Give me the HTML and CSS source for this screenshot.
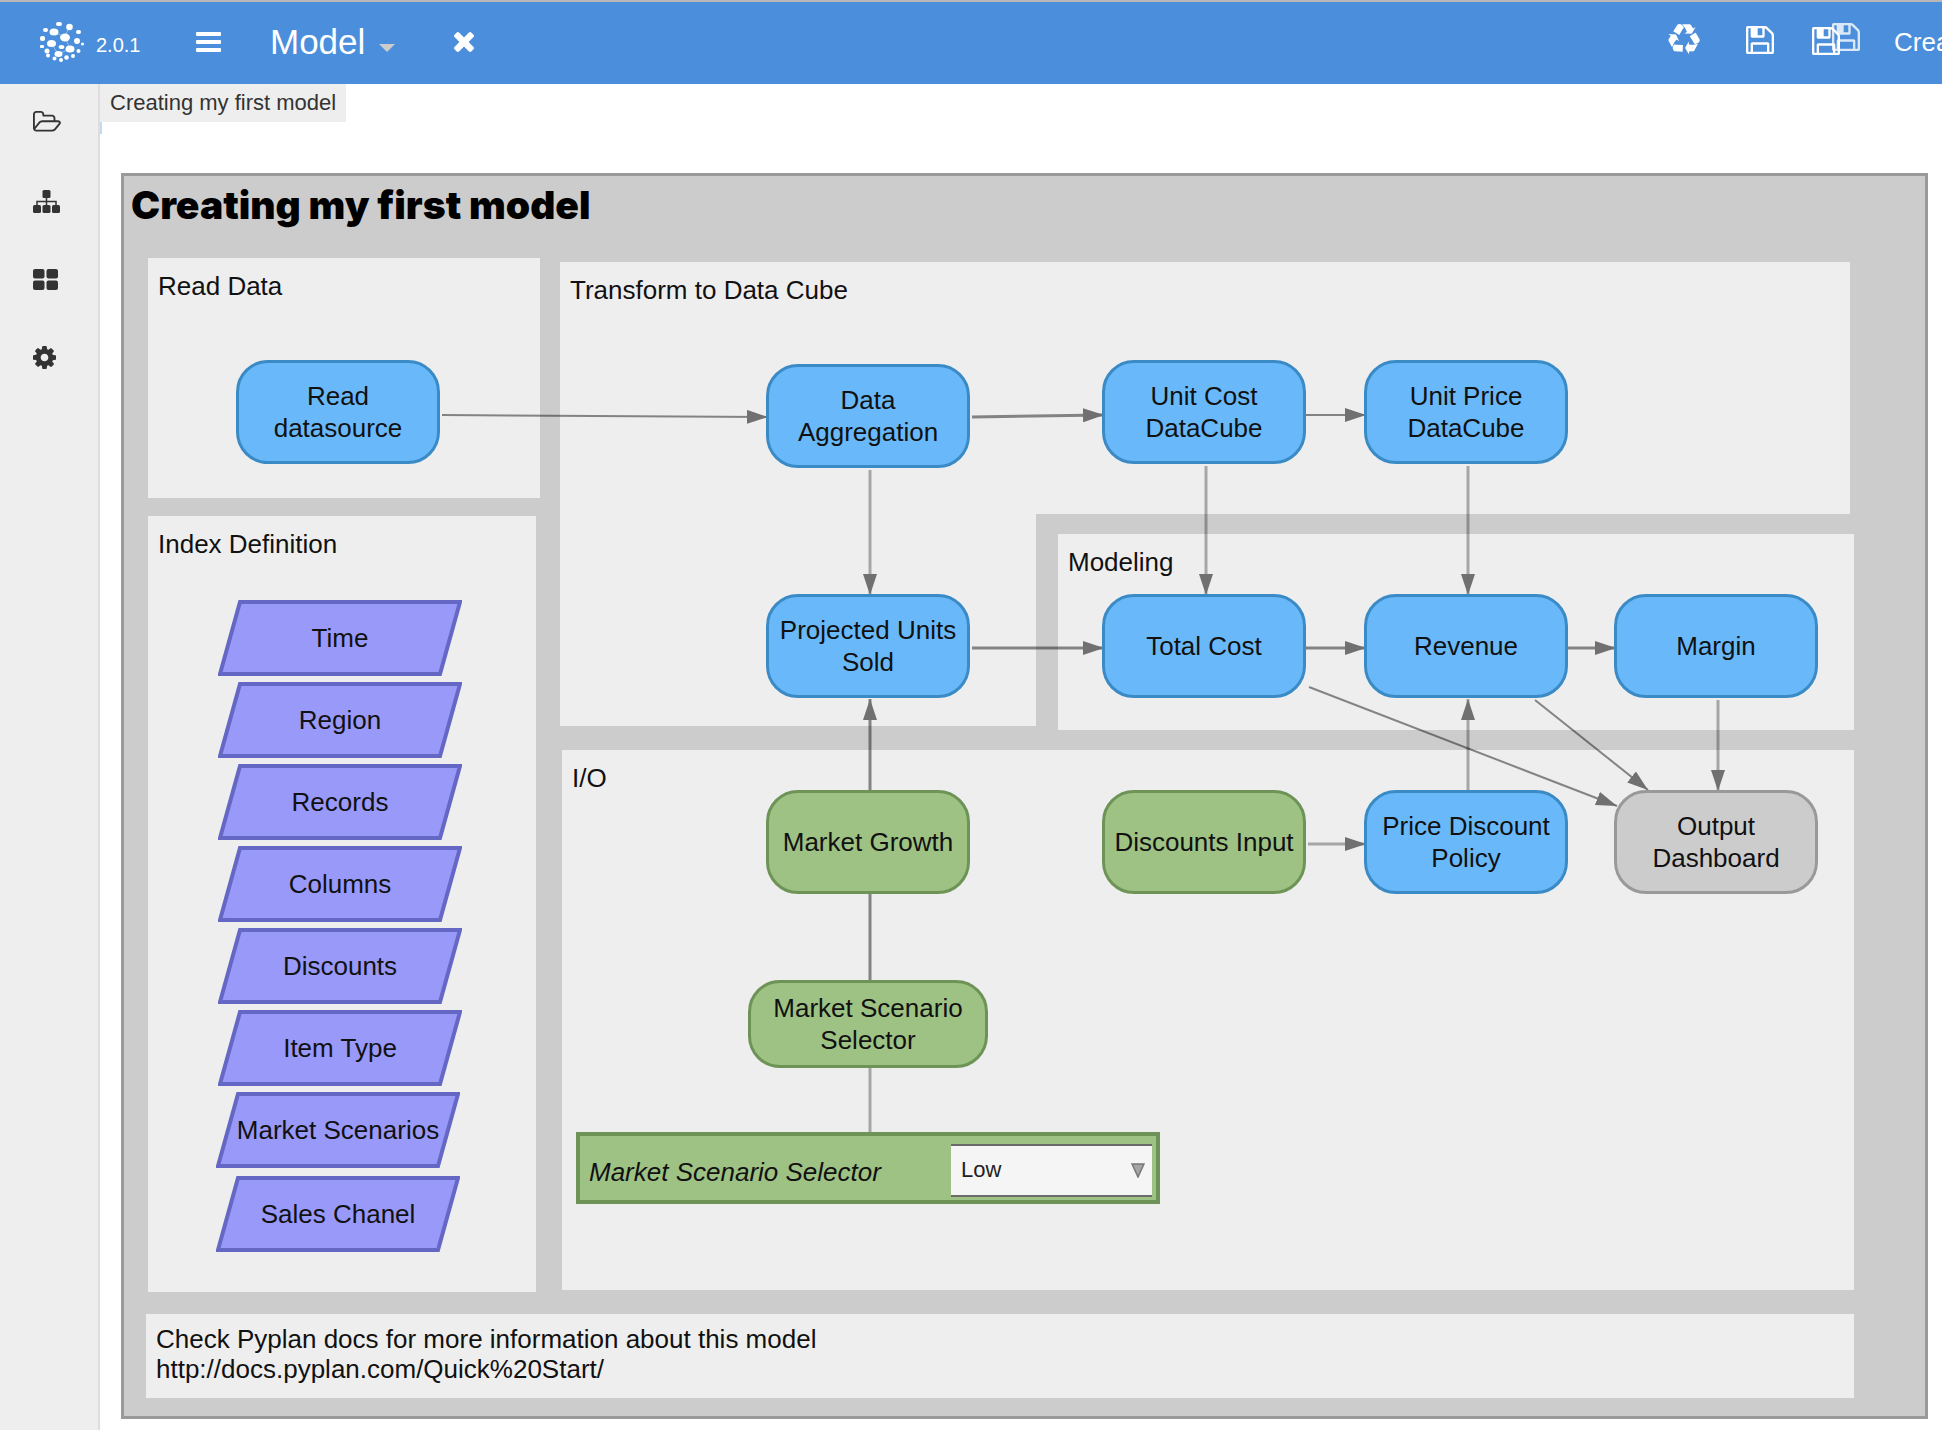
FILE: index.html
```html
<!DOCTYPE html>
<html lang="en">
<head>
<meta charset="utf-8">
<title>Pyplan - Creating my first model</title>
<link rel="stylesheet" href="styles.css">
</head>
<body>
<svg class="defs" aria-hidden="true">
  <symbol id="floppy" viewBox="128 128 1536 1536"><path d="M512 1536h768v-384h-768v384zm896 0h128v-896q0-14-10-38.500t-20-34.500l-281-281q-10-10-34-20t-39-10v416q0 40-28 68t-68 28h-576q-40 0-68-28t-28-68v-416h-128v1280h128v-416q0-40 28-68t68-28h832q40 0 68 28t28 68v416zm-384-928v-320q0-13-9.500-22.500t-22.500-9.500h-192q-13 0-22.500 9.500t-9.500 22.500v320q0 13 9.500 22.500t22.500 9.500h192q13 0 22.500-9.500t9.500-22.500zm640 32v928q0 40-28 68t-68 28h-1344q-40 0-68-28t-28-68v-1344q0-40 28-68t68-28h928q40 0 88 20t76 48l280 280q28 28 48 76t20 88z"/></symbol>
  <symbol id="slab" viewBox="0 0 244 76"><polygon points="22,2 242,2 222,74 2,74" fill="#9999f9" stroke="#6468c4" stroke-width="4"/></symbol>
</svg>

<header class="topbar">
  <a class="brand" href="#">
    <svg class="logo" viewBox="0 0 44 40" aria-label="Pyplan" role="img">
      <g stroke="#fff" stroke-opacity=".4" stroke-width="1"><path d="M14 10L25 15 29 5" fill="none"/><path d="M11 21L18 32 30 27 25 15" fill="none"/></g>
      <g fill="#fff">
        <ellipse cx="14" cy="10" rx="4.500" ry="3.500"/><ellipse cx="25" cy="15.500" rx="5" ry="4"/><ellipse cx="11.500" cy="21.500" rx="4.500" ry="3.500"/><ellipse cx="30" cy="27" rx="4.500" ry="3.500"/><ellipse cx="18.500" cy="32" rx="4" ry="3"/><circle cx="29.500" cy="5" r="3.300"/>
        <circle cx="37" cy="19" r="3"/><ellipse cx="21.500" cy="25" rx="2.800" ry="2"/>
        <rect x="16" y="0" width="6" height="4" rx="2"/><rect x="3" y="6" width="5" height="4" rx="2"/><rect x="36" y="8" width="5" height="4" rx="2"/><rect x="0" y="14" width="5" height="5" rx="2"/><rect x="0" y="23" width="4" height="3" rx="1"/>
        <circle cx="42.500" cy="22" r="1.500"/><circle cx="38.500" cy="29" r="2"/><circle cx="7" cy="29" r="2.500"/><circle cx="8" cy="33.500" r="2"/><circle cx="14.500" cy="36.500" r="2"/><circle cx="21" cy="38" r="2"/><circle cx="26.500" cy="35.500" r="2.300"/><circle cx="33" cy="34" r="2"/>
      </g>
    </svg>
    <span class="version">2.0.1</span>
  </a>
  <button class="icon-btn menu-btn" aria-label="Toggle menu"><svg width="25" height="20" viewBox="0 0 25 20"><rect width="25" height="4" rx="1"/><rect y="8" width="25" height="4" rx="1"/><rect y="16" width="25" height="4" rx="1"/></svg></button>
  <button class="module-btn">Model <svg width="16" height="8" viewBox="0 0 16 8"><path d="M0 0H16L8 8Z"/></svg></button>
  <button class="icon-btn close-btn" aria-label="Close model"><svg width="20" height="20" viewBox="302 366 1188 1188"><path d="M1490 1322q0 40-28 68l-136 136q-28 28-68 28t-68-28l-294-294-294 294q-28 28-68 28t-68-28l-136-136q-28-28-28-68t28-68l294-294-294-294q-28-28-28-68t28-68l136-136q28-28 68-28t68 28l294 294 294-294q28-28 68-28t68 28l136 136q28 28 28 68t-28 68l-294 294 294 294q28 28 28 68z"/></svg></button>
  <div class="actions">
    <button class="icon-btn" aria-label="Recycle"><svg width="32" height="32" viewBox="0 0 1792 1792"><path d="M836 1169l-15 368-2 22-420-29q-36-3-67-31.500t-47-65.500q-11-27-14.500-55t4-65 12-55 21.500-64 19-53q78 12 509 28zm-387-586l180 379-147-92q-63 72-111.500 144.500t-72.500 125-39.500 94.500-18.500 63l-4 21-190-357q-17-26-18-56t6-47l8-18q35-63 114-188l-140-86zm1231 517l-188 359q-12 29-36.500 46.500t-43.500 20.500l-18 4q-71 7-219 12l8 164-230-367 211-362 7 173q170 16 283 5t170-33zm-785-924q-47 63-265 435l-317-187-19-12 225-356q20-31 60-45t80-10q24 2 48.500 12t42 21 41.500 33 36 34.500 36 39.500 32 35zm655 307l212 363q18 37 12.500 76t-27.500 74q-13 20-33 37t-38 28-48.500 22-47 16-51.500 14-46 12q-34-72-265-436l313-195zm-143-226l142-83-220 373-419-20 151-86q-34-89-75-166t-75.500-123.500-64.500-80-47-46.500l-17-13 405 1q31-3 58 10.500t39 28.500l11 15q39 61 112 190z"/></svg></button>
    <button class="icon-btn" aria-label="Save"><svg width="28" height="28"><use href="#floppy"/></svg></button>
    <button class="icon-btn" aria-label="Save as"><svg width="48" height="32"><use href="#floppy" x="20" y="0" width="28" height="28" opacity=".8"/><use href="#floppy" x="0" y="4" width="28" height="28"/></svg></button>
    <a class="model-name" href="#">Crea</a>
  </div>
</header>

<div class="shell">
  <nav class="sidebar" aria-label="Sections">
    <button aria-label="Files"><svg width="28" height="24" viewBox="0 0 1920 1646"><path d="M1781 803q0-35-53-35h-1088q-40 0-85.500 21.500t-71.500 52.500l-294 363q-18 24-18 40 0 35 53 35h1088q40 0 86-22t71-53l294-363q18-22 18-39zm-1141-163h768v-160q0-40-28-68t-68-28h-576q-40 0-68-28t-28-68v-64q0-40-28-68t-68-28h-320q-40 0-68 28t-28 68v853l256-315q44-53 116-87.500t140-34.500zm1269 163q0 62-46 120l-295 363q-43 53-116 87.500t-140 34.500h-1088q-92 0-158-66t-66-158v-960q0-92 66-158t158-66h320q92 0 158 66t66 158v32h544q92 0 158 66t66 158v160h192q54 0 99 24.500t67 70.500q15 32 15 68z"/></svg></button>
    <button aria-label="Model diagram"><svg width="27" height="23" viewBox="0 0 27 23"><rect x="9.500" width="8" height="8" rx="1.500"/><rect y="15" width="8" height="8" rx="1.500"/><rect x="9.500" y="15" width="8" height="8" rx="1.500"/><rect x="19" y="15" width="8" height="8" rx="1.500"/><path d="M13.500 7V16M4 16V11.500H23V16" fill="none" stroke="#333" stroke-width="1.500"/></svg></button>
    <button aria-label="Dashboards"><svg width="25" height="21" viewBox="0 0 25 21"><rect width="11.500" height="9.500" rx="2"/><rect x="13.500" width="11.500" height="9.500" rx="2"/><rect y="11.500" width="11.500" height="9.500" rx="2"/><rect x="13.500" y="11.500" width="11.500" height="9.500" rx="2"/></svg></button>
    <button aria-label="Settings"><svg width="23" height="23" viewBox="128 128 1536 1536"><path d="M1152 896q0-106-75-181t-181-75-181 75-75 181 75 181 181 75 181-75 75-181zm512-109v222q0 12-8 23t-20 13l-185 28q-19 54-39 91 35 50 107 138 10 12 10 25t-9 23q-27 37-99 108t-94 71q-12 0-26-9l-138-108q-44 23-91 38-16 136-29 186-7 28-36 28h-222q-14 0-24.500-8.500t-11.500-21.500l-28-184q-49-16-90-37l-141 107q-10 9-25 9-14 0-25-11-126-114-165-168-7-10-7-23 0-12 8-23 15-21 51-66.500t54-70.500q-27-50-41-99l-183-27q-13-2-21-12.500t-8-23.500v-222q0-12 8-23t19-13l186-28q14-46 39-92-40-57-107-138-10-12-10-24 0-10 9-23 26-36 98.500-107.500t94.500-71.500q13 0 26 10l138 107q44-23 91-38 16-136 29-186 7-28 36-28h222q14 0 24.500 8.500t11.500 21.500l28 184q49 16 90 37l142-107q9-9 24-9 13 0 25 10 129 119 165 170 7 8 7 22 0 12-8 23-15 21-51 66.500t-54 70.500q26 50 41 98l183 28q13 2 21 12.500t8 23.500z"/></svg></button>
  </nav>

  <main class="workspace">
    <nav class="crumbs" aria-label="Breadcrumb"><a href="#">Creating my first model</a></nav>

    <div class="diagram">
      <h1>Creating my first model</h1>

      <section class="panel read"><h2>Read Data</h2></section>
      <section class="panel transform"><h2>Transform to Data Cube</h2></section>
      <section class="panel modeling"><h2>Modeling</h2></section>
      <section class="panel io"><h2>I/O</h2></section>
      <section class="panel index">
        <h2>Index Definition</h2>
        <div class="index-list">
          <button class="slab"><svg><use href="#slab"/></svg><span>Time</span></button>
          <button class="slab"><svg><use href="#slab"/></svg><span>Region</span></button>
          <button class="slab"><svg><use href="#slab"/></svg><span>Records</span></button>
          <button class="slab"><svg><use href="#slab"/></svg><span>Columns</span></button>
          <button class="slab"><svg><use href="#slab"/></svg><span>Discounts</span></button>
          <button class="slab"><svg><use href="#slab"/></svg><span>Item Type</span></button>
          <button class="slab"><svg><use href="#slab"/></svg><span>Market Scenarios</span></button>
          <button class="slab"><svg><use href="#slab"/></svg><span>Sales Chanel</span></button>
        </div>
      </section>
      <section class="panel notes"><p>Check Pyplan docs for more information about this model<br>http://docs.pyplan.com/Quick%20Start/</p></section>

      <svg class="edges" viewBox="121 173 1807 1246" aria-hidden="true">
        <defs><marker id="tip" viewBox="0 0 21 14" markerWidth="21" markerHeight="14" refX="21" refY="7" orient="auto" markerUnits="userSpaceOnUse"><path d="M0 0L21 7 0 14Z" fill="#707070"/></marker></defs>
        <g class="thin" marker-end="url(#tip)">
          <path d="M442 415L768 417"/><path d="M1306 415H1366"/>
          <path d="M1309 687L1617 806"/><path d="M1535 700L1648 790"/>
        </g>
        <g class="firm">
          <path d="M972 417L1104 415" marker-end="url(#tip)"/><path d="M972 648H1104" marker-end="url(#tip)"/>
          <path d="M1306 648H1366" marker-end="url(#tip)"/><path d="M1568 648H1616" marker-end="url(#tip)"/>
          <path d="M870 790V699" marker-end="url(#tip)"/><path d="M870 894V980"/>
        </g>
        <g class="light">
          <path d="M870 470V595" marker-end="url(#tip)"/><path d="M1206 466V595" marker-end="url(#tip)"/><path d="M1468 466V595" marker-end="url(#tip)"/>
          <path d="M1468 790V699" marker-end="url(#tip)"/><path d="M1718 700V791" marker-end="url(#tip)"/><path d="M1308 844H1366" marker-end="url(#tip)"/>
          <path d="M870 1068V1132"/>
        </g>
      </svg>

      <button class="node blue read-source">Read<br>datasource</button>
      <button class="node blue aggregation">Data<br>Aggregation</button>
      <button class="node blue unit-cost">Unit Cost<br>DataCube</button>
      <button class="node blue unit-price">Unit Price<br>DataCube</button>
      <button class="node blue units-sold">Projected Units<br>Sold</button>
      <button class="node blue total-cost">Total Cost</button>
      <button class="node blue revenue">Revenue</button>
      <button class="node blue margin">Margin</button>
      <button class="node green growth">Market Growth</button>
      <button class="node green discounts-input">Discounts Input</button>
      <button class="node blue discount-policy">Price Discount<br>Policy</button>
      <button class="node gray output">Output<br>Dashboard</button>
      <button class="node green scenario">Market Scenario<br>Selector</button>

      <div class="form-node">
        <label for="scenario">Market Scenario Selector</label>
        <div class="picker">
          <select id="scenario"><option>Low</option></select>
          <svg width="14" height="15" viewBox="0 0 14 15" aria-hidden="true"><path d="M1 1H13L7 14Z" fill="#a5a5a5" stroke="#777" stroke-width="1.500"/></svg>
        </div>
      </div>
    </div>
  </main>
</div>
</body>
</html>
```
FILE: styles.css
```css
* { box-sizing: border-box; }

body {
  margin: 0;
  background: #fff;
  color: #111;
  font-family: "Liberation Sans", Arial, Helvetica, sans-serif;
  font-size: 26px;
  line-height: 32px;
  overflow-x: hidden;
}

button {
  margin: 0;
  padding: 0;
  border: 0;
  background: none;
  color: inherit;
  font: inherit;
  cursor: pointer;
}

a { color: inherit; text-decoration: none; }
svg { display: block; }
.defs { position: absolute; width: 0; height: 0; }

/* Top bar */
.topbar {
  display: flex;
  align-items: center;
  height: 84px;
  padding: 0 0 2px 40px;
  border-top: 2px solid #b8b8b8;
  background: #4b8edb;
  color: #fff;
  fill: #fff;
  overflow: hidden;
}
.brand { display: flex; align-items: center; gap: 12px; width: 156px; }
.logo { width: 44px; height: 40px; }
.version { padding-top: 6px; font-size: 20px; }
.module-btn {
  display: flex;
  align-items: center;
  gap: 14px;
  margin-left: 49px;
  font-size: 35px;
  line-height: 40px;
}
.module-btn svg { margin-top: 12px; fill: #ccc; }
.close-btn { margin-left: 59px; }
.actions {
  display: flex;
  align-items: center;
  gap: 46px;
  flex: none;
  width: 274px;
  margin-left: auto;
}
.actions .icon-btn { margin-top: -4px; }
.actions .icon-btn:nth-child(3) { margin: -6px -12px 0 -8px; }
.model-name { white-space: nowrap; }

/* Sidebar */
.shell { display: flex; min-height: calc(100vh - 84px); }
.sidebar {
  flex: none;
  width: 100px;
  border-right: 2px solid #e0dcdf;
  background: #eee;
  fill: #333;
}
.sidebar button {
  display: flex;
  align-items: center;
  width: 100%;
  height: 78px;
  padding-left: 33px;
}

/* Workspace */
.workspace { flex: 1; min-width: 0; }
.crumbs { position: relative; display: flex; }
.crumbs a {
  padding: 0 10px;
  background: #eee;
  color: #333;
  font-size: 22px;
  line-height: 38px;
}
.crumbs::after {
  content: "";
  position: absolute;
  top: 100%;
  left: 0;
  width: 2px;
  height: 12px;
  background: #c5d9f2;
}

/* Diagram canvas */
.diagram {
  position: relative;
  min-height: 1246px;
  margin: 51px 14px 11px 21px;
  padding: 12px 10px;
  background: #ccc;
  box-shadow: inset 0 0 0 3px #9a9a9a;
}
h1 {
  margin: 0;
  color: #000;
  font: 900 39px/40px Inter, "Liberation Sans", sans-serif;
  font-optical-sizing: none;
}
h2 { margin: 0; font-size: 26px; font-weight: 400; line-height: 32px; }

.panel { position: absolute; padding: 12px 10px; background: #eee; }
.panel.read { left: 27px; top: 85px; width: 392px; height: 240px; }
.panel.transform {
  left: 439px; top: 89px; width: 1290px; height: 464px;
  clip-path: polygon(0 0, 100% 0, 100% 252px, 476px 252px, 476px 100%, 0 100%);
}
.panel.index { left: 27px; top: 343px; width: 388px; height: 776px; }
.panel.modeling { left: 937px; top: 361px; width: 796px; height: 196px; }
.panel.io { left: 441px; top: 577px; width: 1292px; height: 540px; }
.panel.notes { left: 25px; top: 1141px; width: 1708px; height: 84px; padding-top: 10px; }
.panel.notes p { margin: 0; line-height: 30px; }

.index-list {
  display: flex;
  flex-direction: column;
  gap: 6px;
  margin: 40px 0 0 60px;
}
.slab { position: relative; width: 244px; height: 76px; }
.slab svg { position: absolute; inset: 0; width: 244px; height: 76px; }
.slab span { position: relative; }
.slab:nth-child(n+7) { margin-left: -2px; }
.slab:last-child { margin-top: 2px; }

.edges { position: absolute; left: 0; top: 0; width: 1807px; height: 1246px; pointer-events: none; fill: none; }
.thin { stroke: rgba(0, 0, 0, .45); stroke-width: 2; }
.firm { stroke: rgba(0, 0, 0, .45); stroke-width: 3; }
.light { stroke: rgba(0, 0, 0, .3); stroke-width: 3; }

.node {
  position: absolute;
  width: 204px;
  height: 104px;
  border: 3px solid;
  border-radius: 32px;
  white-space: nowrap;
}
.blue { border-color: #3a8ac6; background: #69b9fa; }
.green { border-color: #6d9456; background: #9ec284; }
.gray { border-color: #999; background: #ccc; }
.node, .slab, .form-node { color: #111; }

.read-source { left: 115px; top: 187px; }
.aggregation { left: 645px; top: 191px; }
.unit-cost { left: 981px; top: 187px; }
.unit-price { left: 1243px; top: 187px; }
.units-sold { left: 645px; top: 421px; }
.total-cost { left: 981px; top: 421px; }
.revenue { left: 1243px; top: 421px; }
.margin { left: 1493px; top: 421px; }
.growth { left: 645px; top: 617px; }
.discounts-input { left: 981px; top: 617px; }
.discount-policy { left: 1243px; top: 617px; }
.output { left: 1493px; top: 617px; }
.scenario { left: 627px; top: 807px; width: 240px; height: 88px; }

.form-node {
  position: absolute;
  left: 455px;
  top: 959px;
  display: flex;
  align-items: center;
  justify-content: space-between;
  width: 584px;
  height: 72px;
  padding: 4px 4px 0 9px;
  border: 4px solid #6d9456;
  background: #9ec284;
}
.form-node label { padding-top: 4px; font-style: italic; }
.picker { position: relative; width: 201px; }
.picker select {
  appearance: none;
  display: block;
  width: 100%;
  height: 53px;
  padding: 0 10px;
  border: solid #6b6b6b;
  border-width: 2px 0;
  border-radius: 0;
  background: #f5f5f5;
  color: #222;
  font: 22px/32px "Liberation Sans", Arial, sans-serif;
}
.picker svg { position: absolute; right: 7px; top: 19px; pointer-events: none; }
```
